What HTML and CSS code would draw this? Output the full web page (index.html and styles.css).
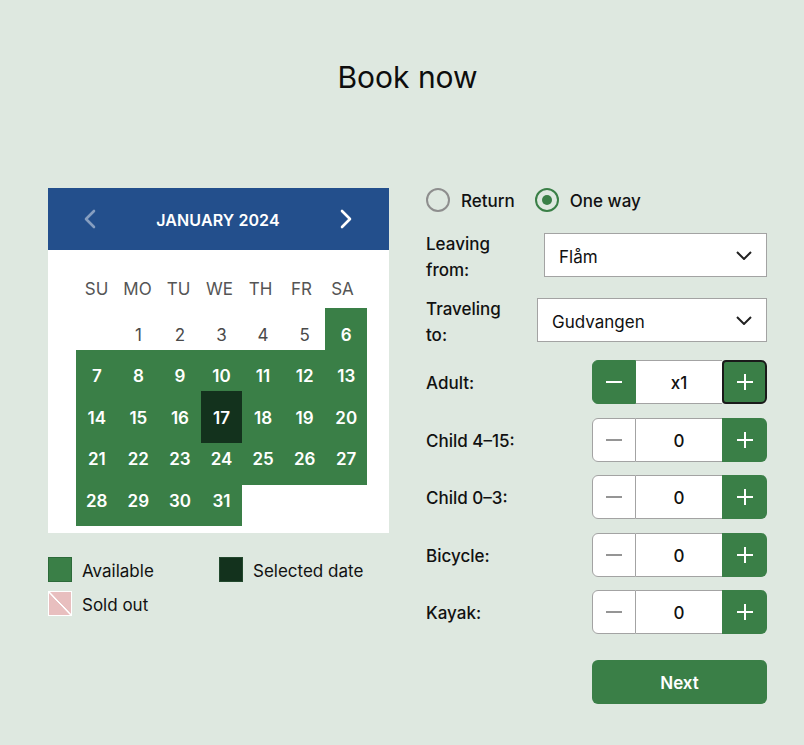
FILE: index.html
```html
<!DOCTYPE html>
<html lang="en">
<head>
<meta charset="utf-8">
<title>Book now</title>
<link rel="stylesheet" href="styles.css">
</head>
<body>
<div class="page">
  <h1 class="title">Book now</h1>
  <div class="booking">
    <section class="cal-col">
      <div class="calendar">
        <div class="cal-head">
          <span class="nav nav-prev"><svg width="12" height="20" viewBox="0 0 12 20"><polyline points="10,2 2,10 10,18" fill="none" stroke="currentColor" stroke-width="2.6" stroke-linecap="round" stroke-linejoin="round"/></svg></span>
          <span class="month">JANUARY 2024</span>
          <span class="nav nav-next"><svg width="12" height="20" viewBox="0 0 12 20"><polyline points="2,2 10,10 2,18" fill="none" stroke="currentColor" stroke-width="2.6" stroke-linecap="round" stroke-linejoin="round"/></svg></span>
        </div>
        <div class="cal-body">
          <div class="weekdays">
            <span>SU</span><span>MO</span><span>TU</span><span>WE</span><span>TH</span><span>FR</span><span>SA</span>
          </div>
          <div class="days">
            <span class="day"></span>
            <span class="day">1</span>
            <span class="day">2</span>
            <span class="day">3</span>
            <span class="day">4</span>
            <span class="day">5</span>
            <span class="day avail">6</span>
            <span class="day avail">7</span>
            <span class="day avail">8</span>
            <span class="day avail">9</span>
            <span class="day avail">10</span>
            <span class="day avail">11</span>
            <span class="day avail">12</span>
            <span class="day avail">13</span>
            <span class="day avail">14</span>
            <span class="day avail">15</span>
            <span class="day avail">16</span>
            <span class="day avail selected">17</span>
            <span class="day avail">18</span>
            <span class="day avail">19</span>
            <span class="day avail">20</span>
            <span class="day avail">21</span>
            <span class="day avail">22</span>
            <span class="day avail">23</span>
            <span class="day avail">24</span>
            <span class="day avail">25</span>
            <span class="day avail">26</span>
            <span class="day avail">27</span>
            <span class="day avail">28</span>
            <span class="day avail">29</span>
            <span class="day avail">30</span>
            <span class="day avail">31</span>
          </div>
        </div>
      </div>
      <div class="legend">
        <div class="legend-item"><span class="swatch sw-avail"></span><span class="legend-text">Available</span></div>
        <div class="legend-item"><span class="swatch sw-sel"></span><span class="legend-text">Selected date</span></div>
        <div class="legend-item"><span class="swatch sw-sold"></span><span class="legend-text">Sold out</span></div>
      </div>
    </section>

    <section class="form">
      <div class="radios">
        <label class="radio"><span class="radio-circle"></span><span class="radio-text">Return</span></label>
        <label class="radio"><span class="radio-circle on"><span class="radio-dot"></span></span><span class="radio-text">One way</span></label>
      </div>

      <div class="field">
        <span class="field-label">Leaving<br>from:</span>
        <div class="select select-from"><span class="select-text">Flåm</span><svg width="16" height="9" viewBox="0 0 16 9"><polyline points="1,1 8,8 15,1" fill="none" stroke="#222" stroke-width="2"/></svg></div>
      </div>
      <div class="field">
        <span class="field-label">Traveling<br>to:</span>
        <div class="select select-to"><span class="select-text">Gudvangen</span><svg width="16" height="9" viewBox="0 0 16 9"><polyline points="1,1 8,8 15,1" fill="none" stroke="#222" stroke-width="2"/></svg></div>
      </div>

      <div class="counters">
        <div class="counter-row">
          <span class="counter-label">Adult:</span>
          <div class="counter">
            <span class="c-btn c-minus active"><svg width="16" height="2" viewBox="0 0 16 2"><rect width="16" height="2" fill="currentColor"/></svg></span>
            <span class="c-val">x1</span>
            <span class="c-btn c-plus focused"><svg width="16" height="16" viewBox="0 0 16 16"><rect x="0" y="7" width="16" height="2" fill="currentColor"/><rect x="7" y="0" width="2" height="16" fill="currentColor"/></svg></span>
          </div>
        </div>
        <div class="counter-row">
          <span class="counter-label">Child 4–15:</span>
          <div class="counter">
            <span class="c-btn c-minus"><svg width="16" height="2" viewBox="0 0 16 2"><rect width="16" height="2" fill="currentColor"/></svg></span>
            <span class="c-val">0</span>
            <span class="c-btn c-plus"><svg width="16" height="16" viewBox="0 0 16 16"><rect x="0" y="7" width="16" height="2" fill="currentColor"/><rect x="7" y="0" width="2" height="16" fill="currentColor"/></svg></span>
          </div>
        </div>
        <div class="counter-row">
          <span class="counter-label">Child 0–3:</span>
          <div class="counter">
            <span class="c-btn c-minus"><svg width="16" height="2" viewBox="0 0 16 2"><rect width="16" height="2" fill="currentColor"/></svg></span>
            <span class="c-val">0</span>
            <span class="c-btn c-plus"><svg width="16" height="16" viewBox="0 0 16 16"><rect x="0" y="7" width="16" height="2" fill="currentColor"/><rect x="7" y="0" width="2" height="16" fill="currentColor"/></svg></span>
          </div>
        </div>
        <div class="counter-row">
          <span class="counter-label">Bicycle:</span>
          <div class="counter">
            <span class="c-btn c-minus"><svg width="16" height="2" viewBox="0 0 16 2"><rect width="16" height="2" fill="currentColor"/></svg></span>
            <span class="c-val">0</span>
            <span class="c-btn c-plus"><svg width="16" height="16" viewBox="0 0 16 16"><rect x="0" y="7" width="16" height="2" fill="currentColor"/><rect x="7" y="0" width="2" height="16" fill="currentColor"/></svg></span>
          </div>
        </div>
        <div class="counter-row">
          <span class="counter-label">Kayak:</span>
          <div class="counter">
            <span class="c-btn c-minus"><svg width="16" height="2" viewBox="0 0 16 2"><rect width="16" height="2" fill="currentColor"/></svg></span>
            <span class="c-val">0</span>
            <span class="c-btn c-plus"><svg width="16" height="16" viewBox="0 0 16 16"><rect x="0" y="7" width="16" height="2" fill="currentColor"/><rect x="7" y="0" width="2" height="16" fill="currentColor"/></svg></span>
          </div>
        </div>
      </div>

      <button class="next">Next</button>
    </section>
  </div>
</div>
</body>
</html>
```

FILE: styles.css
```css
* { box-sizing: border-box; }

body {
  margin: 0;
  background: #dee8e0;
  font-family: Inter, "Noto Sans", sans-serif;
  color: #111;
}

.page {
  padding: 57px 37px 0 48px;
}

.title {
  margin: 0;
  text-align: center;
  font-size: 30px;
  font-weight: 400;
  line-height: 40px;
  color: #0d0d0d;
}

.booking {
  display: flex;
  gap: 37px;
  margin-top: 91px;
}

/* Calendar */
.cal-col { width: 341px; }

.calendar {
  background: #fff;
  padding-bottom: 17px;
}

.cal-head {
  height: 62px;
  background: #234f8c;
  color: #fff;
  display: flex;
  align-items: center;
  justify-content: space-between;
  padding: 0 37px 0 36px;
}

.nav { display: flex; }
.nav-prev { color: rgba(255, 255, 255, 0.45); }
.nav-next { color: #fff; }

.month {
  font-size: 16px;
  font-weight: 600;
  letter-spacing: 0.1px;
  padding-top: 1px;
}

.cal-body {
  padding: 18px 22px 0 28px;
}

.weekdays {
  display: grid;
  grid-template-columns: repeat(7, 1fr);
  height: 40px;
  align-items: center;
  text-align: center;
  font-size: 17px;
  color: #555;
  padding-right: 4px;
  padding-top: 1px;
}

.days {
  display: grid;
  grid-template-columns: repeat(7, 1fr);
  grid-auto-rows: 41.6px;
}

.day {
  height: 52px;
  display: flex;
  align-items: center;
  justify-content: center;
  font-size: 17px;
  color: #4a4a4a;
  padding-top: 1px;
}

.day.avail {
  background: #3a7f47;
  color: #fff;
  font-weight: 600;
}

.day.selected {
  background: #13321d;
  position: relative;
  z-index: 1;
}

/* Legend */
.legend {
  margin-top: 24px;
  display: grid;
  grid-template-columns: 171px 1fr;
  row-gap: 9px;
}

.legend-item {
  display: flex;
  align-items: center;
  gap: 10px;
  font-size: 17px;
  color: #111;
}

.legend-text { padding-top: 4px; }

.swatch {
  width: 24px;
  height: 25px;
  flex: none;
}

.sw-avail { background: #3a7f47; border: 1px solid #2c6a3a; }
.sw-sel { background: #13321d; border: 1px solid #23492e; }
.sw-sold {
  border: 1.5px solid #fff;
  background: linear-gradient(to top right, #e8bfbf calc(50% - 1px), #ffffff calc(50% - 0.5px), #ffffff calc(50% + 0.5px), #e8bfbf calc(50% + 1px));
}

/* Form */
.form {
  width: 341px;
  display: flex;
  flex-direction: column;
}

.radios {
  display: flex;
  align-items: center;
  gap: 20px;
  height: 24px;
}

.radio {
  display: flex;
  align-items: center;
  gap: 11px;
  font-size: 17px;
  font-weight: 500;
}

.radio-text { padding-top: 2px; }

.radio-circle {
  width: 24px;
  height: 24px;
  border-radius: 50%;
  border: 2px solid #8e8e8e;
  display: flex;
  align-items: center;
  justify-content: center;
}

.radio-circle.on { border-color: #3a7f47; }

.radio-dot {
  width: 10px;
  height: 10px;
  border-radius: 50%;
  background: #3a7f47;
}

.field {
  display: flex;
  align-items: center;
  justify-content: space-between;
  height: 44px;
  margin-top: 21px;
}

.field-label {
  font-size: 17px;
  font-weight: 500;
  line-height: 26px;
  padding-top: 3px;
}

.select {
  height: 44px;
  background: #fff;
  border: 1px solid #a3a3a3;
  display: flex;
  align-items: center;
  justify-content: space-between;
  padding: 0 14px;
  font-size: 17px;
}

.select-text { padding-top: 3px; }

.select-from { width: 223px; }
.select-to { width: 230px; }

.counters {
  display: flex;
  flex-direction: column;
  gap: 13.5px;
  margin-top: 18px;
}

.counter-row {
  display: flex;
  align-items: center;
  justify-content: space-between;
  height: 44px;
}

.counter-label {
  font-size: 17px;
  font-weight: 500;
  padding-top: 2px;
}

.counter {
  width: 175px;
  height: 44px;
  display: flex;
}

.c-btn {
  display: flex;
  align-items: center;
  justify-content: center;
}

.c-minus {
  width: 44px;
  background: #fff;
  color: #959595;
  border: 1px solid #a3a3a3;
  border-radius: 6px 0 0 6px;
}

.c-minus.active {
  background: #3a7f47;
  border-color: #3a7f47;
  color: #fff;
}

.c-val {
  flex: 1;
  display: flex;
  align-items: center;
  justify-content: center;
  background: #fff;
  border-top: 1px solid #a3a3a3;
  border-bottom: 1px solid #a3a3a3;
  font-size: 17px;
  font-weight: 500;
  padding-top: 2px;
}

.c-plus {
  width: 45px;
  background: #3a7f47;
  color: #fff;
  border-radius: 0 6px 6px 0;
}

.c-plus.focused {
  border: 2px solid #1a1a1a;
  border-radius: 4px 6px 6px 4px;
}

.next {
  align-self: flex-end;
  margin-top: 26px;
  width: 175px;
  height: 44px;
  border: none;
  border-radius: 6px;
  background: #3a7f47;
  color: #fff;
  font-family: inherit;
  font-size: 17px;
  font-weight: 600;
  padding-top: 3px;
}
```
